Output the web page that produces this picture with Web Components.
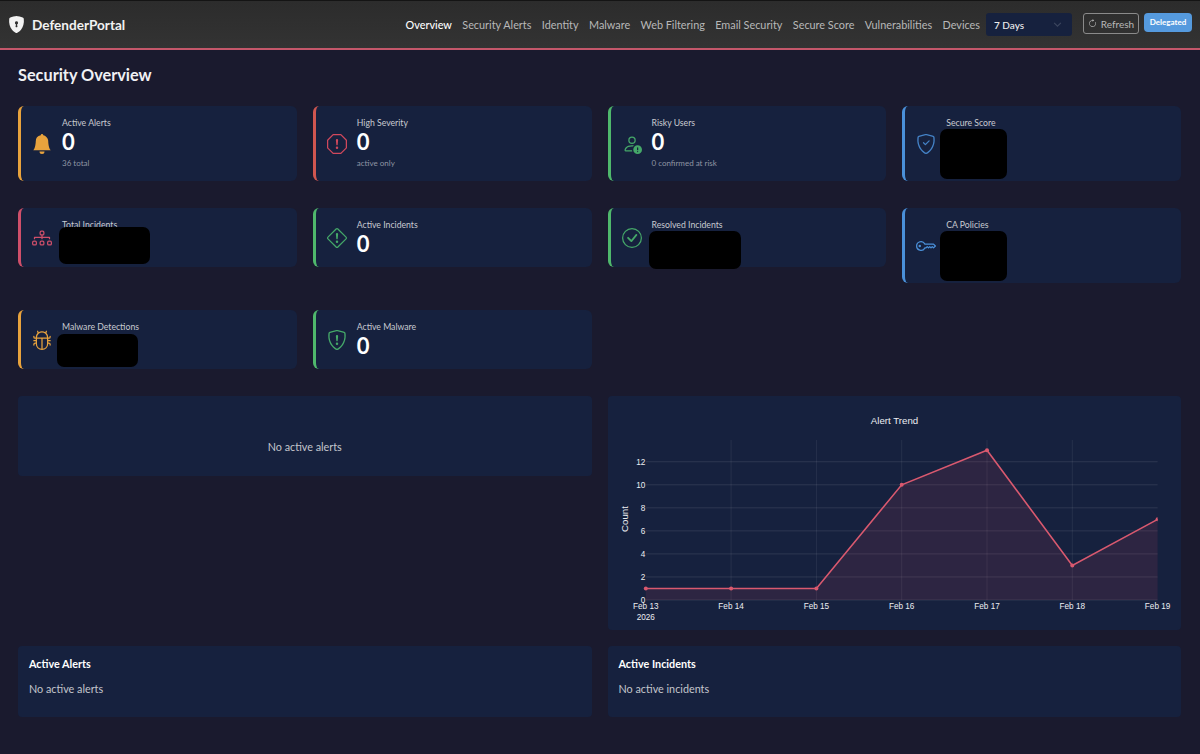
<!DOCTYPE html>
<html lang="en">
<head>
<meta charset="utf-8">
<title>DefenderPortal</title>
<style>
    html, body {
        margin: 0;
        background-color: #1a1a2e;
        color: #fff;
        font-family: "Lato", "Liberation Sans", sans-serif;
    }
</style>
</head>
<body>
<dp-navbar></dp-navbar>
<dp-dashboard></dp-dashboard>

<script>
const MARK = "M7.002 11a1 1 0 1 1 2 0 1 1 0 0 1-2 0zM7.1 4.995a.905.905 0 1 1 1.8 0l-.35 3.507a.552.552 0 0 1-1.1 0L7.1 4.995z";
const SHIELD = "M5.338 1.59a61.44 61.44 0 0 0-2.837.856.481.481 0 0 0-.328.39c-.554 4.157.726 7.19 2.253 9.188a10.725 10.725 0 0 0 2.287 2.233c.346.244.652.42.893.533.12.057.218.095.293.118a.55.55 0 0 0 .101.025.615.615 0 0 0 .1-.025c.076-.023.174-.061.294-.118.24-.113.547-.29.893-.533a10.726 10.726 0 0 0 2.287-2.233c1.527-1.997 2.807-5.031 2.253-9.188a.48.48 0 0 0-.328-.39c-.651-.213-1.75-.56-2.837-.855C9.552 1.29 8.531 1.067 8 1.067c-.53 0-1.552.223-2.662.524zM5.072.56C6.157.265 7.31 0 8 0s1.843.265 2.928.56c1.11.3 2.229.655 2.887.87a1.54 1.54 0 0 1 1.044 1.262c.596 4.477-.787 7.795-2.465 9.99a11.775 11.775 0 0 1-2.517 2.453 7.159 7.159 0 0 1-1.048.625c-.28.132-.581.24-.829.24s-.548-.108-.829-.24a7.158 7.158 0 0 1-1.048-.625 11.777 11.777 0 0 1-2.517-2.453C1.928 10.487.545 7.169 1.141 2.692A1.54 1.54 0 0 1 2.185 1.43 62.456 62.456 0 0 1 5.072.56z";

const ICONS = {
    bell: "M8 16a2 2 0 0 0 2-2H6a2 2 0 0 0 2 2zm.995-14.901a1 1 0 1 0-1.99 0A5.002 5.002 0 0 0 3 6c0 1.098-.5 6-2 7h14c-1.5-1-2-5.902-2-7 0-2.42-1.72-4.44-4.005-4.901z",
    octagon: "M4.54.146A.5.5 0 0 1 4.893 0h6.214a.5.5 0 0 1 .353.146l4.394 4.394a.5.5 0 0 1 .146.353v6.214a.5.5 0 0 1-.146.353l-4.394 4.394a.5.5 0 0 1-.353.146H4.893a.5.5 0 0 1-.353-.146L.146 11.46A.5.5 0 0 1 0 11.107V4.893a.5.5 0 0 1 .146-.353L4.54.146zM5.1 1 1 5.1v5.8L5.1 15h5.8l4.1-4.1V5.1L10.9 1H5.1z" + MARK,
    person: "M11 5a3 3 0 1 1-6 0 3 3 0 0 1 6 0ZM8 7a2 2 0 1 0 0-4 2 2 0 0 0 0 4Zm.256 7a4.474 4.474 0 0 1-.229-1.004H3c.001-.246.154-.986.832-1.664C4.484 10.68 5.711 10 8 10c.26 0 .507.009.74.025.226-.341.496-.65.804-.918C9.077 9.038 8.564 9 8 9c-5 0-6 3-6 4s1 1 1 1h5.256ZM16 12.5a3.5 3.5 0 1 1-7 0 3.5 3.5 0 0 1 7 0Zm-3.5-2a.5.5 0 0 0-.5.5v1.5a.5.5 0 0 0 1 0V11a.5.5 0 0 0-.5-.5Zm0 4a.5.5 0 1 0 0-1 .5.5 0 0 0 0 1Z",
    shieldCheck: SHIELD + "M10.854 5.146a.5.5 0 0 1 0 .708l-3 3a.5.5 0 0 1-.708 0l-1.5-1.5a.5.5 0 1 1 .708-.708L7.5 7.793l2.646-2.647a.5.5 0 0 1 .708 0z",
    diagram: "M6 3.5A1.5 1.5 0 0 1 7.5 2h1A1.5 1.5 0 0 1 10 3.5v1A1.5 1.5 0 0 1 8.5 6v1H14a.5.5 0 0 1 .5.5v1a.5.5 0 0 1-1 0V8h-5v.5a.5.5 0 0 1-1 0V8h-5v.5a.5.5 0 0 1-1 0v-1A.5.5 0 0 1 2 7h5.5V6A1.5 1.5 0 0 1 6 4.5v-1zM8.5 5a.5.5 0 0 0 .5-.5v-1a.5.5 0 0 0-.5-.5h-1a.5.5 0 0 0-.5.5v1a.5.5 0 0 0 .5.5h1zM0 11.5A1.5 1.5 0 0 1 1.5 10h1A1.5 1.5 0 0 1 4 11.5v1A1.5 1.5 0 0 1 2.5 14h-1A1.5 1.5 0 0 1 0 12.5v-1zm1.5-.5a.5.5 0 0 0-.5.5v1a.5.5 0 0 0 .5.5h1a.5.5 0 0 0 .5-.5v-1a.5.5 0 0 0-.5-.5h-1zm4.5.5A1.5 1.5 0 0 1 7.5 10h1a1.5 1.5 0 0 1 1.5 1.5v1A1.5 1.5 0 0 1 8.5 14h-1A1.5 1.5 0 0 1 6 12.5v-1zm1.5-.5a.5.5 0 0 0-.5.5v1a.5.5 0 0 0 .5.5h1a.5.5 0 0 0 .5-.5v-1a.5.5 0 0 0-.5-.5h-1zm4.5.5a1.5 1.5 0 0 1 1.5-1.5h1a1.5 1.5 0 0 1 1.5 1.5v1a1.5 1.5 0 0 1-1.5 1.5h-1a1.5 1.5 0 0 1-1.5-1.5v-1zm1.5-.5a.5.5 0 0 0-.5.5v1a.5.5 0 0 0 .5.5h1a.5.5 0 0 0 .5-.5v-1a.5.5 0 0 0-.5-.5h-1z",
    diamond: "M6.95.435c.58-.58 1.52-.58 2.1 0l6.515 6.516c.58.58.58 1.519 0 2.098L9.05 15.565c-.58.58-1.519.58-2.098 0L.435 9.05a1.482 1.482 0 0 1 0-2.098L6.95.435zm1.4.7a.495.495 0 0 0-.7 0L1.134 7.65a.495.495 0 0 0 0 .7l6.516 6.516a.495.495 0 0 0 .7 0l6.516-6.516a.495.495 0 0 0 0-.7L8.35 1.134z" + MARK,
    check: "M8 15A7 7 0 1 1 8 1a7 7 0 0 1 0 14zm0 1A8 8 0 1 0 8 0a8 8 0 0 0 0 16zM10.97 4.97a.235.235 0 0 0-.02.022L7.477 9.417 5.384 7.323a.75.75 0 0 0-1.06 1.06L6.97 11.03a.75.75 0 0 0 1.079-.02l3.992-4.99a.75.75 0 0 0-1.071-1.05z",
    key: "M0 8a4 4 0 0 1 7.465-2H14a.5.5 0 0 1 .354.146l1.5 1.5a.5.5 0 0 1 0 .708l-1.5 1.5a.5.5 0 0 1-.708 0L13 9.207l-.646.647a.5.5 0 0 1-.708 0L11 9.207l-.646.647a.5.5 0 0 1-.708 0L9 9.207l-.646.647A.5.5 0 0 1 8 10h-.535A4 4 0 0 1 0 8zm4-3a3 3 0 1 0 2.712 4.285A.5.5 0 0 1 7.163 9h.63l.853-.854a.5.5 0 0 1 .708 0l.646.647.646-.647a.5.5 0 0 1 .708 0l.646.647.646-.647a.5.5 0 0 1 .708 0l.646.647.793-.793-1-1h-6.63a.5.5 0 0 1-.451-.285A3 3 0 0 0 4 5zM4 8a1 1 0 1 1-2 0 1 1 0 0 1 2 0z",
    bug: "M4.355.522a.5.5 0 0 1 .623.333l.291.956A4.979 4.979 0 0 1 8 1c1.007 0 1.946.298 2.731.811l.29-.956a.5.5 0 1 1 .957.29l-.41 1.352A4.985 4.985 0 0 1 13 6h.5a.5.5 0 0 0 .5-.5V5a.5.5 0 0 1 1 0v.5A1.5 1.5 0 0 1 13.5 7H13v1h1.5a.5.5 0 0 1 0 1H13v1h.5a1.5 1.5 0 0 1 1.5 1.5v.5a.5.5 0 1 1-1 0v-.5a.5.5 0 0 0-.5-.5H13a5 5 0 0 1-10 0h-.5a.5.5 0 0 0-.5.5v.5a.5.5 0 1 1-1 0v-.5A1.5 1.5 0 0 1 2.5 10H3V9H1.5a.5.5 0 0 1 0-1H3V7h-.5A1.5 1.5 0 0 1 1 5.5V5a.5.5 0 0 1 1 0v.5a.5.5 0 0 0 .5.5H3c0-1.364.547-2.601 1.432-3.503l-.41-1.352a.5.5 0 0 1 .333-.623zM4 7v4a4 4 0 0 0 3.5 3.97V7H4zm4.5 0v7.97A4 4 0 0 0 12 11V7H8.5zM12 6a3.989 3.989 0 0 0-1.334-2.982A3.983 3.983 0 0 0 8 2a3.983 3.983 0 0 0-2.667 1.018A3.989 3.989 0 0 0 4 6h8z",
    shieldMark: SHIELD + MARK,
    lock: "M8 0c-.69 0-1.843.265-2.928.56-1.11.3-2.229.655-2.887.87a1.54 1.54 0 0 0-1.044 1.262c-.596 4.477.787 7.795 2.465 9.99a11.777 11.777 0 0 0 2.517 2.453c.386.273.744.482 1.048.625.28.132.581.24.829.24s.548-.108.829-.24a7.159 7.159 0 0 0 1.048-.625 11.775 11.775 0 0 0 2.517-2.453c1.678-2.195 3.061-5.513 2.465-9.99a1.541 1.541 0 0 0-1.044-1.263 62.467 62.467 0 0 0-2.887-.87C9.843.266 8.69 0 8 0zm0 5a1.5 1.5 0 0 1 .5 2.915l.385 1.99a.5.5 0 0 1-.491.595h-.788a.5.5 0 0 1-.49-.595l.384-1.99A1.5 1.5 0 0 1 8 5z",
    refresh: "M8 3a5 5 0 1 0 4.546 2.914.5.5 0 0 1 .908-.417A6 6 0 1 1 8 2v1zM8 4.466V.534a.25.25 0 0 1 .41-.192l2.36 1.966c.12.1.12.284 0 .384L8.41 4.658A.25.25 0 0 1 8 4.466z"
};

function icon(name, size)
{
    return `<svg width="${size}" height="${size}" viewBox="0 0 16 16" fill="currentColor"><path fill-rule="evenodd" d="${ICONS[name]}"/></svg>`;
}

class DpNavbar extends HTMLElement
{
    constructor()
    {
        super();
        let links = ["Overview", "Security Alerts", "Identity", "Malware", "Web Filtering", "Email Security", "Secure Score", "Vulnerabilities", "Devices"];
        this.attachShadow({mode: "open"}).innerHTML = `
<style>
    :host {
        display: flex;
        box-sizing: border-box;
        height: 50px;
        padding: 0 8px;
        background: linear-gradient(#2c2c2c, #333);
        border-top: 1px solid #141414;
        border-bottom: 2px solid #c4576a;
    }
    .brand {
        display: flex;
        align-items: center;
        gap: 7px;
        font-size: 13.6px;
        font-weight: 700;
        color: #f2f2f2;
    }
    .brand svg { display: block; }
    nav {
        display: flex;
        align-items: center;
        gap: 10.4px;
        margin-left: auto;
        font-size: 10.85px;
        color: #b8b8b8;
    }
    nav .active { color: #fff; font-weight: 500; }
    .select {
        display: flex;
        align-items: center;
        justify-content: space-between;
        box-sizing: border-box;
        width: 86px;
        height: 23px;
        margin: 12px 0 0 6px;
        padding: 0 8px;
        border-radius: 3px;
        background-color: #16213e;
        font-size: 10px;
        font-weight: 500;
        color: #ececec;
    }
    .select svg { margin-right: 2px; }
    .refresh {
        display: flex;
        align-items: center;
        justify-content: center;
        gap: 4px;
        box-sizing: border-box;
        width: 56px;
        height: 21px;
        margin: 12px 0 0 11px;
        border: 1px solid #8a8a8a;
        border-radius: 3px;
        font-size: 10px;
        color: #b8b8b8;
    }
    .badge {
        display: flex;
        align-items: center;
        justify-content: center;
        box-sizing: border-box;
        width: 48px;
        height: 19px;
        margin: 12px 0 0 5px;
        padding-bottom: 2px;
        border-radius: 4px;
        background-color: #559ade;
        font-size: 8px;
        font-weight: 700;
        color: #fff;
    }
</style>
<div class="brand">${icon("lock", 17)}<span>DefenderPortal</span></div>
<nav>${links.map((l, i) => `<span class="${i == 0 ? "active" : ""}">${l}</span>`).join("")}</nav>
<div class="select"><span>7 Days</span>
    <svg width="9" height="9" viewBox="0 0 16 16" fill="none" stroke="#3c465e" stroke-width="2"><path d="M2 5l6 6 6-6"/></svg>
</div>
<div class="refresh">${icon("refresh", 9)}<span>Refresh</span></div>
<div class="badge">Delegated</div>
`;
    }
}
customElements.define("dp-navbar", DpNavbar);

class DpStatCard extends HTMLElement
{
    connectedCallback()
    {
        let sub = this.getAttribute("sub");
        let color = this.getAttribute("color");
        this.attachShadow({mode: "open"}).innerHTML = `
<style>
    :host {
        display: flex;
        position: relative;
        box-sizing: border-box;
        align-items: center;
        gap: 10px;
        padding: 11px;
        border-left: 3px solid ${color};
        border-radius: 6px;
        background-color: #16213e;
    }
    svg { flex: none; display: block; color: ${this.getAttribute("tint") || color}; }
    .label { font-size: 8.7px; line-height: 12px; color: #c8cad0; }
    .value { margin-top: 1px; font-size: 22px; line-height: 24px; font-weight: 700; color: #fff; }
    .sub { margin-top: 3px; font-size: 8px; line-height: 13px; color: #8f95a3; }
</style>
${icon(this.getAttribute("icon"), 20)}
<div>
    <div class="label">${this.getAttribute("label")}</div>
    <div class="value">${this.getAttribute("value")}</div>
    ${sub === null ? "" : `<div class="sub">${sub || "&nbsp;"}</div>`}
</div>
<slot></slot>
`;
    }
}
customElements.define("dp-stat-card", DpStatCard);

// black box hiding a value, sits over the card it is placed in
class DpRedact extends HTMLElement
{
    connectedCallback()
    {
        let [l, t, w, h] = this.getAttribute("box").split(",");
        this.attachShadow({mode: "open"}).innerHTML = `
<style>
    :host {
        position: absolute;
        left: ${l}px;
        top: ${t}px;
        width: ${w}px;
        height: ${h}px;
        border-radius: 7px;
        background-color: #000;
    }
</style>`;
    }
}
customElements.define("dp-redact", DpRedact);

class DpPanel extends HTMLElement
{
    constructor()
    {
        super();
        this.attachShadow({mode: "open"}).innerHTML = `
<style>
    :host {
        display: block;
        box-sizing: border-box;
        padding: 11px;
        border-radius: 4px;
        background-color: #16213e;
    }
    :host([empty]) {
        display: flex;
        align-items: center;
        justify-content: center;
        height: 80px;
        padding-top: 33px;
    }
    .title { font-size: 10.8px; line-height: 14px; font-weight: 700; color: #fff; }
    .body { margin-top: 11px; font-size: 10.8px; line-height: 14px; color: #c4c6cc; }
    :host([empty]) .title { display: none; }
    :host([empty]) .body { margin: 0; }
</style>
<div class="title">${this.getAttribute("title") || ""}</div>
<div class="body"><slot></slot></div>
`;
    }
}
customElements.define("dp-panel", DpPanel);

class DpTrendChart extends HTMLElement
{
    constructor()
    {
        super();
        let days = ["Feb 13", "Feb 14", "Feb 15", "Feb 16", "Feb 17", "Feb 18", "Feb 19"];
        let counts = [1, 1, 1, 10, 13, 3, 7];
        let left = 645.3, step = 85.3, zero = 600, unit = 11.52, top = 440;
        let xs = days.map((d, i) => left + i * step);
        let right = xs[6];
        let ys = counts.map((c) => zero - c * unit);
        let line = xs.map((x, i) => `${x},${ys[i]}`).join(" ");
        let grid = "", labels = "";
        xs.forEach((x, i) => {
            if (i > 0 && i < 6) {
                grid += `<line x1="${x}" x2="${x}" y1="${top}" y2="${zero}" stroke-opacity="0.07"/>`;
            }
            labels += `<text x="${x}" y="608.5" text-anchor="middle">${days[i]}</text>`;
        });
        for (let v = 0; v <= 12; v += 2) {
            let y = zero - v * unit;
            grid += `<line x1="${left}" x2="${right}" y1="${y}" y2="${y}" stroke-opacity="0.1"/>`;
            labels += `<text x="${left - 0.5}" y="${y + 3}" text-anchor="end">${v}</text>`;
        }
        this.attachShadow({mode: "open"}).innerHTML = `
<style>
    :host {
        display: block;
        height: 234px;
        border-radius: 4px;
        background-color: #16213e;
    }
    svg { display: block; }
    text { font-family: "Liberation Sans", sans-serif; font-size: 8.2px; fill: #eceef2; }
    .grid line { stroke: #fff; stroke-width: 1; }
</style>
<svg width="573.5" height="234" viewBox="607.5 396 573.5 234">
    <text x="894" y="423.5" text-anchor="middle" style="font-size:9.7px">Alert Trend</text>
    <g class="grid">${grid}</g>
    <polygon points="${left},${zero} ${line} ${right},${zero}" fill="#e94560" fill-opacity="0.11"/>
    <polyline points="${line}" fill="none" stroke="#d9596f" stroke-width="1.6"/>
    <clipPath id="plot"><rect x="${left - 4}" y="${top}" width="${right - left + 4}" height="170"/></clipPath>
    <g clip-path="url(#plot)">${xs.map((x, i) => `<circle cx="${x}" cy="${ys[i]}" r="2" fill="#d9596f"/>`).join("")}</g>
    ${labels}
    <text x="645.3" y="619.5" text-anchor="middle">2026</text>
    <text transform="translate(627 519) rotate(-90)" text-anchor="middle" style="font-size:9.7px">Count</text>
</svg>
`;
    }
}
customElements.define("dp-trend-chart", DpTrendChart);

class DpDashboard extends HTMLElement
{
    constructor()
    {
        super();
        this.attachShadow({mode: "open"}).innerHTML = `
<style>
    :host { display: block; padding: 14px 19px 37px 18px; }
    h1 {
        margin: 0 0 21px;
        font-size: 16.3px;
        line-height: 21px;
        font-weight: 700;
        color: #f0f1f4;
    }
    .grid {
        display: grid;
        grid-template-columns: repeat(4, 1fr);
        column-gap: 16px;
        row-gap: 27px;
        align-items: start;
    }
    .split {
        display: grid;
        grid-template-columns: 1fr 1fr;
        gap: 16px;
        align-items: start;
        margin-top: 27px;
    }
</style>
<h1>Security Overview</h1>
<div class="grid">
    <dp-stat-card label="Active Alerts" value="0" sub="36 total" icon="bell" color="#e8a33d"></dp-stat-card>
    <dp-stat-card label="High Severity" value="0" sub="active only" icon="octagon" color="#cf5650" tint="#d0485c"></dp-stat-card>
    <dp-stat-card label="Risky Users" value="0" sub="0 confirmed at risk" icon="person" color="#4fb86c" tint="#45a869"></dp-stat-card>
    <dp-stat-card label="Secure Score" value="0" sub="" icon="shieldCheck" color="#4a90d9" tint="#4482c6"><dp-redact box="35,23,67,50"></dp-redact></dp-stat-card>
    <dp-stat-card label="Total Incidents" value="0" icon="diagram" color="#cf4f6a"><dp-redact box="38,19,91,37"></dp-redact></dp-stat-card>
    <dp-stat-card label="Active Incidents" value="0" icon="diamond" color="#4fb86c" tint="#45a869"></dp-stat-card>
    <dp-stat-card label="Resolved Incidents" value="0" icon="check" color="#4fb86c" tint="#45a869"><dp-redact box="38.5,23,92,38"></dp-redact></dp-stat-card>
    <dp-stat-card label="CA Policies" value="0" sub="" icon="key" color="#4a90d9"><dp-redact box="35,23,67,50"></dp-redact></dp-stat-card>
    <dp-stat-card label="Malware Detections" value="0" icon="bug" color="#e8a33d"><dp-redact box="36,24,81,33"></dp-redact></dp-stat-card>
    <dp-stat-card label="Active Malware" value="0" icon="shieldMark" color="#4fb86c" tint="#45a869"></dp-stat-card>
</div>
<div class="split">
    <dp-panel empty>No active alerts</dp-panel>
    <dp-trend-chart></dp-trend-chart>
    <dp-panel title="Active Alerts" style="height:71px">No active alerts</dp-panel>
    <dp-panel title="Active Incidents" style="height:71px">No active incidents</dp-panel>
</div>
`;
    }
}
customElements.define("dp-dashboard", DpDashboard);
</script>
</body>
</html>
